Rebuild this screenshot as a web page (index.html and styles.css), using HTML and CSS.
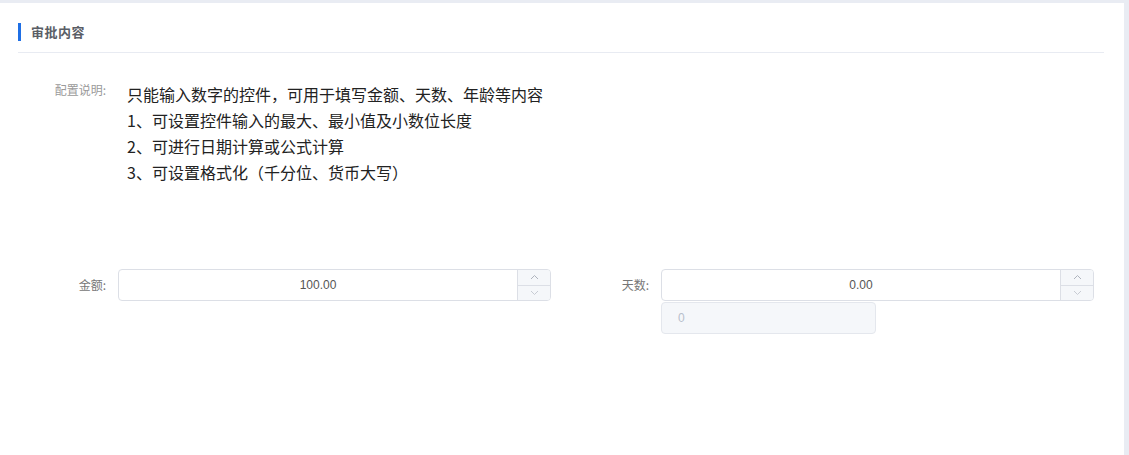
FILE: index.html
```html
<!DOCTYPE html>
<html lang="zh">
<head>
<meta charset="utf-8">
<link rel="stylesheet" href="styles.css">
</head>
<body>
<div class="page">
  <div class="card">
    <div class="card-head">
      <span class="head-bar"></span>
      <span class="head-title">审批内容</span>
    </div>
    <div class="config-row">
      <div class="config-label">配置说明:</div>
      <div class="config-text">
        <div>只能输入数字的控件，可用于填写金额、天数、年龄等内容</div>
        <div>1、可设置控件输入的最大、最小值及小数位长度</div>
        <div>2、可进行日期计算或公式计算</div>
        <div>3、可设置格式化（千分位、货币大写）</div>
      </div>
    </div>
    <div class="form-grid">
      <div class="form-item">
        <label class="item-label">金额:</label>
        <div class="item-body">
          <div class="num-input">
            <span class="num-value">100.00</span>
            <div class="stepper">
              <span class="step step-up"><svg width="9" height="6" viewBox="0 0 9 6"><path d="M1 5 L4.5 1.5 L8 5" fill="none" stroke="#aeb3bd" stroke-width="1"/></svg></span>
              <span class="step step-down"><svg width="9" height="6" viewBox="0 0 9 6"><path d="M1 1 L4.5 4.5 L8 1" fill="none" stroke="#c8ccd4" stroke-width="1"/></svg></span>
            </div>
          </div>
        </div>
      </div>
      <div class="form-item">
        <label class="item-label">天数:</label>
        <div class="item-body">
          <div class="num-input">
            <span class="num-value">0.00</span>
            <div class="stepper">
              <span class="step step-up"><svg width="9" height="6" viewBox="0 0 9 6"><path d="M1 5 L4.5 1.5 L8 5" fill="none" stroke="#aeb3bd" stroke-width="1"/></svg></span>
              <span class="step step-down"><svg width="9" height="6" viewBox="0 0 9 6"><path d="M1 1 L4.5 4.5 L8 1" fill="none" stroke="#c8ccd4" stroke-width="1"/></svg></span>
            </div>
          </div>
          <div class="sub-box">0</div>
        </div>
      </div>
    </div>
  </div>
</div>
</body>
</html>
```
FILE: styles.css
```css
* { box-sizing: border-box; }
html, body {
  margin: 0;
  padding: 0;
  background: #e9ecf3;
  font-family: "Noto Sans CJK SC", "Noto Sans", sans-serif;
}
.page {
  padding: 3px 5px 0 0;
  height: 455px;
}
.card {
  background: #ffffff;
  height: 452px;
  padding: 0 20px 0 18px;
}
.card-head {
  display: flex;
  align-items: center;
  height: 50px;
  padding-top: 8px;
  border-bottom: 1px solid #e8ebf2;
}
.head-bar {
  width: 3px;
  height: 18px;
  background: #1f6fe5;
}
.head-title {
  margin-left: 10px;
  font-size: 13px;
  font-weight: bold;
  color: #5a5e66;
  letter-spacing: 0.5px;
}
.config-row {
  display: flex;
  padding-top: 29px;
}
.config-label {
  width: 88px;
  text-align: right;
  font-size: 12px;
  color: #9a9a9a;
  line-height: 16px;
}
.config-text {
  padding-left: 21px;
  font-size: 16px;
  line-height: 26px;
  color: #222;
  margin-top: -1px;
}
.form-grid {
  display: grid;
  grid-template-columns: 1fr 1fr;
  column-gap: 10px;
  margin-top: 84px;
  margin-right: 10px;
}
.form-item {
  display: flex;
  align-items: flex-start;
}
.item-label {
  width: 100px;
  flex: none;
  text-align: right;
  padding-right: 12px;
  font-size: 12px;
  line-height: 31px;
  color: #777;
}
.item-body {
  flex: 1;
  display: flex;
  flex-direction: column;
  gap: 1px;
}
.num-input {
  position: relative;
  height: 32px;
  border: 1px solid #dcdfe6;
  border-radius: 4px;
  display: flex;
  align-items: center;
  background: #fff;
}
.num-value {
  flex: 1;
  text-align: center;
  font-family: "Liberation Sans", Arial, sans-serif;
  font-size: 12px;
  color: #555;
}
.stepper {
  width: 33px;
  height: 100%;
  border-left: 1px solid #dcdfe6;
  display: flex;
  flex-direction: column;
  background: #f5f7fa;
  border-radius: 0 3px 3px 0;
}
.step {
  flex: 1;
  display: flex;
  align-items: center;
  justify-content: center;
}
.step-up { border-bottom: 1px solid #dcdfe6; }
.sub-box {
  width: 215px;
  height: 32px;
  border: 1px solid #e4e7ed;
  border-radius: 4px;
  background: #f5f7fa;
  font-family: "Liberation Sans", Arial, sans-serif;
  font-size: 12px;
  color: #b8c0cc;
  line-height: 30px;
  padding-left: 16px;
}
```
